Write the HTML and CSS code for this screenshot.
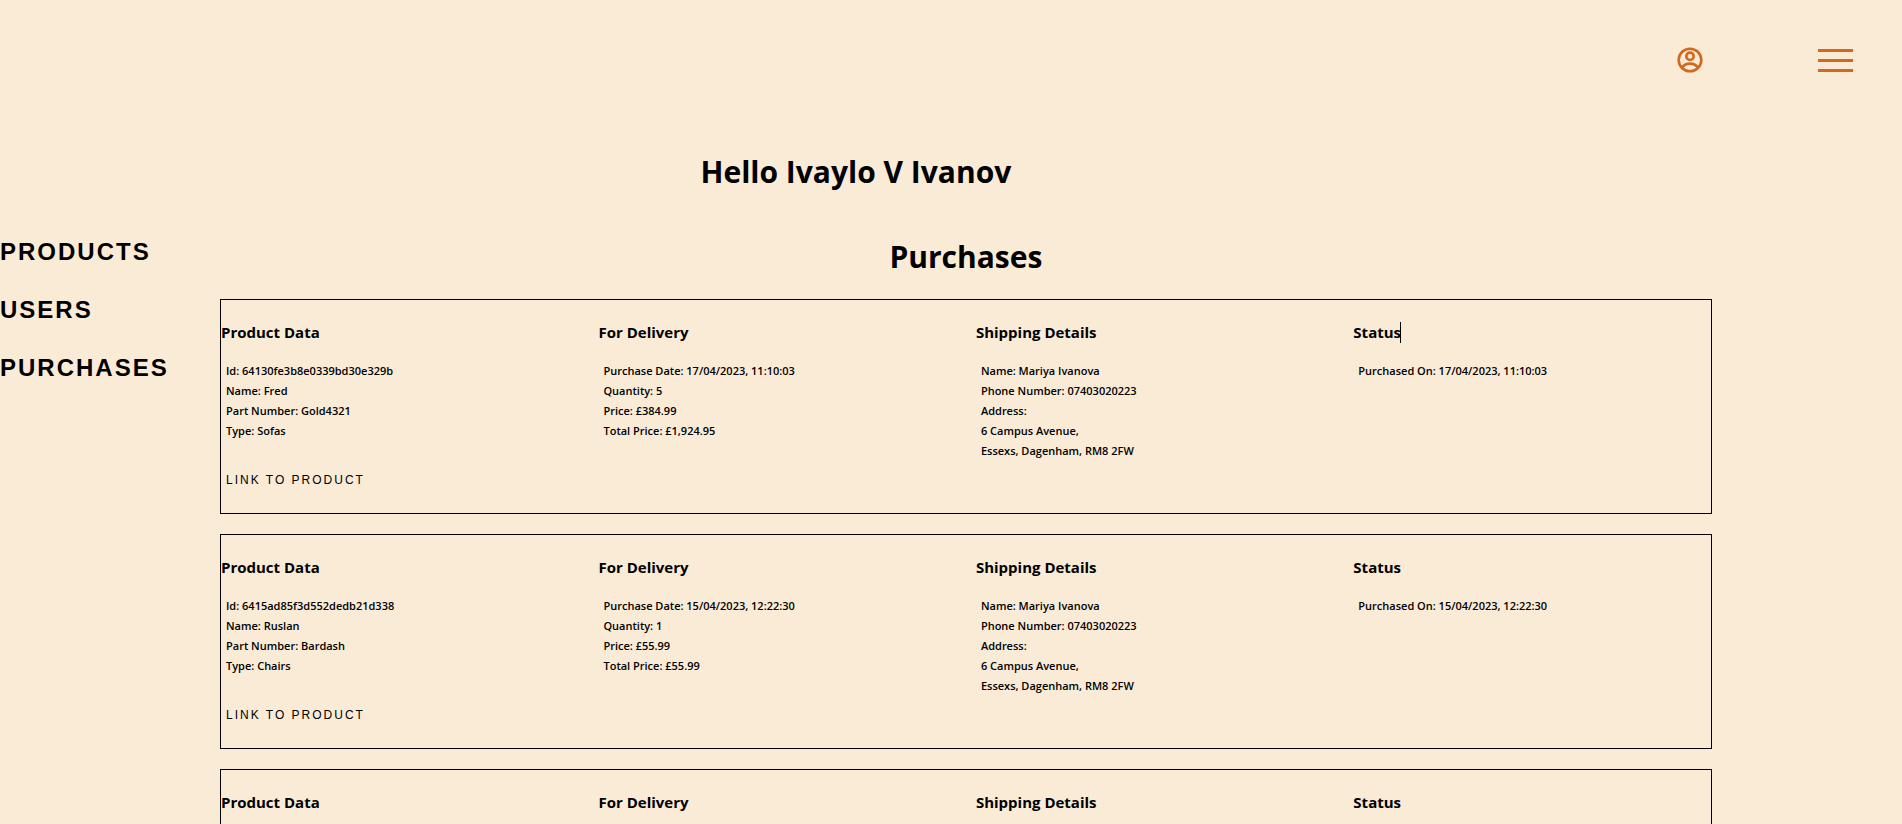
FILE: index.html
```html
<!DOCTYPE html>
<html lang="en">
<head>
<meta charset="utf-8">
<title>Purchases</title>
<link rel="stylesheet" href="styles.css">
</head>
<body>
<header class="topbar">
  <a class="account" href="#account" aria-label="Account">
    <svg class="account-icon" viewBox="0 0 26 26" fill="none" stroke="currentColor" stroke-width="2.600">
      <circle cx="13" cy="13" r="11.300"/>
      <circle cx="13" cy="9.300" r="3.700"/>
      <path d="M4.800 20.500c2.200-2.600 5-3.900 8.200-3.900s6 1.300 8.200 3.900"/>
    </svg>
  </a>
  <button class="menu" type="button" aria-label="Menu">
    <span class="menu-bar"></span><span class="menu-bar"></span><span class="menu-bar"></span>
  </button>
</header>
<main class="page">
  <h1 class="title">Hello Ivaylo V Ivanov</h1>
  <div class="content">
    <nav class="side">
      <a class="side-link" href="#products">Products</a>
      <a class="side-link" href="#users">Users</a>
      <a class="side-link" href="#purchases">Purchases</a>
    </nav>
    <section class="purchases">
      <h2 class="title">Purchases</h2>
      <article class="card">
        <div class="col">
          <h3 class="col-title">Product Data</h3>
          <ul class="facts"><li>Id: 64130fe3b8e0339bd30e329b</li><li>Name: Fred</li><li>Part Number: Gold4321</li><li>Type: Sofas</li></ul>
          <a class="product-link" href="#product-1">Link to product</a>
        </div>
        <div class="col">
          <h3 class="col-title">For Delivery</h3>
          <ul class="facts"><li>Purchase Date: 17/04/2023, 11:10:03</li><li>Quantity: 5</li><li>Price: £384.99</li><li>Total Price: £1,924.95</li></ul>
        </div>
        <div class="col">
          <h3 class="col-title">Shipping Details</h3>
          <ul class="facts"><li>Name: Mariya Ivanova</li><li>Phone Number: 07403020223</li><li>Address:</li><li>6 Campus Avenue,</li><li>Essexs, Dagenham, RM8 2FW</li></ul>
        </div>
        <div class="col">
          <h3 class="col-title"><span class="caret">Status</span></h3>
          <ul class="facts"><li>Purchased On: 17/04/2023, 11:10:03</li></ul>
        </div>
      </article>
      <article class="card">
        <div class="col">
          <h3 class="col-title">Product Data</h3>
          <ul class="facts"><li>Id: 6415ad85f3d552dedb21d338</li><li>Name: Ruslan</li><li>Part Number: Bardash</li><li>Type: Chairs</li></ul>
          <a class="product-link" href="#product-2">Link to product</a>
        </div>
        <div class="col">
          <h3 class="col-title">For Delivery</h3>
          <ul class="facts"><li>Purchase Date: 15/04/2023, 12:22:30</li><li>Quantity: 1</li><li>Price: £55.99</li><li>Total Price: £55.99</li></ul>
        </div>
        <div class="col">
          <h3 class="col-title">Shipping Details</h3>
          <ul class="facts"><li>Name: Mariya Ivanova</li><li>Phone Number: 07403020223</li><li>Address:</li><li>6 Campus Avenue,</li><li>Essexs, Dagenham, RM8 2FW</li></ul>
        </div>
        <div class="col">
          <h3 class="col-title">Status</h3>
          <ul class="facts"><li>Purchased On: 15/04/2023, 12:22:30</li></ul>
        </div>
      </article>
      <article class="card">
        <div class="col"><h3 class="col-title">Product Data</h3></div>
        <div class="col"><h3 class="col-title">For Delivery</h3></div>
        <div class="col"><h3 class="col-title">Shipping Details</h3></div>
        <div class="col"><h3 class="col-title">Status</h3></div>
      </article>
    </section>
  </div>
</main>
</body>
</html>
```
FILE: styles.css
```css
* { box-sizing: border-box; }
html { height: 100%; }
body {
  margin: 0;
  height: 100%;
  overflow: hidden;
  background: #faebd7;
  color: #000;
  font-family: "Segoe UI", "Open Sans", "Noto Sans", sans-serif;
}
a { color: inherit; text-decoration: none; }
.topbar {
  display: flex;
  justify-content: flex-end;
  align-items: center;
  gap: 115px;
  height: 120px;
  padding-right: 49px;
  color: #d2691e;
}
.account, .account-icon { display: block; width: 26px; height: 26px; }
.menu {
  display: flex;
  flex-direction: column;
  gap: 7px;
  width: 35px;
  padding: 0;
  border: 0;
  background: none;
  color: inherit;
}
.menu-bar { height: 3px; background: currentColor; }
.page { padding: 30px 10% 0 0; }
.title {
  margin: 0;
  font-size: 30px;
  line-height: 44px;
  font-weight: 700;
  text-align: center;
}
.content {
  display: grid;
  grid-template-columns: 200px 1fr;
  gap: 20px;
  margin-top: 41px;
}
.side {
  display: flex;
  flex-direction: column;
  gap: 30px;
  padding-top: 3px;
}
.side-link {
  font: bold 24px/28px Arial, "Liberation Sans", sans-serif;
  letter-spacing: 2px;
  text-transform: uppercase;
}
.purchases {
  display: flex;
  flex-direction: column;
  gap: 20px;
}
.card {
  display: grid;
  grid-template-columns: repeat(4, 1fr);
  gap: 20px;
  min-height: 215px;
  border: 1px solid #000;
}
.col-title {
  margin: 21px 0 18px;
  font-size: 15px;
  line-height: 22px;
  font-weight: 700;
}
.facts {
  margin: 0;
  padding: 0 0 0 5px;
  list-style: none;
  font-size: 11px;
  line-height: 20px;
  font-weight: 600;
}
.product-link {
  display: block;
  margin: 30px 0 0 5px;
  font: 12px/18px Arial, "Liberation Sans", sans-serif;
  letter-spacing: 2px;
  text-transform: uppercase;
}
.caret { position: relative; }
.caret::after {
  content: "";
  position: absolute;
  top: 0;
  right: 0;
  width: 1px;
  height: 21px;
  background: #000;
}
```
